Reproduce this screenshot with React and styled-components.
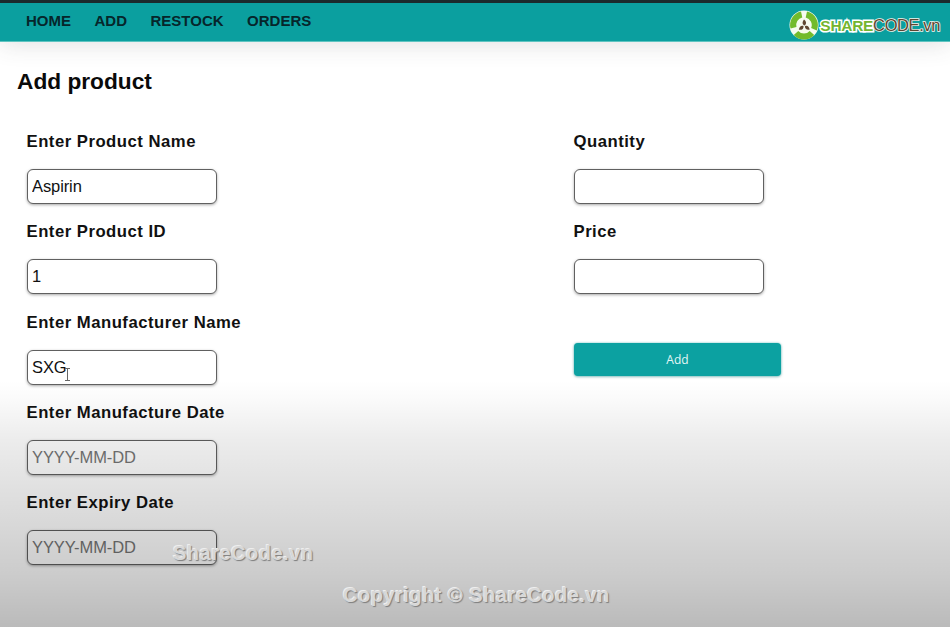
import React from 'react'
import styled, { createGlobalStyle } from 'styled-components'

const GlobalStyle = createGlobalStyle`
  html, body {
    margin: 0;
    padding: 0;
    background: #fff;
    font-family: "Liberation Sans", Arial, sans-serif;
  }
`;

const leftFields = [
  { label: 'Enter Product Name', value: 'Aspirin' },
  { label: 'Enter Product ID', value: '1' },
  { label: 'Enter Manufacturer Name', value: 'SXG', cursor: true },
  { label: 'Enter Manufacture Date', placeholder: 'YYYY-MM-DD' },
  { label: 'Enter Expiry Date', placeholder: 'YYYY-MM-DD' },
];

const rightFields = [
  { label: 'Quantity', value: '' },
  { label: 'Price', value: '' },
];

const navLinks = ['HOME', 'ADD', 'RESTOCK', 'ORDERS'];

const Logo = () => (
  <LogoWrap>
    <svg width="30" height="30" viewBox="0 0 32 32">
      <circle cx="16" cy="16" r="15.5" fill="#f6fbef" />
      <g fill="none" stroke="#72bb2c" strokeWidth="6.5">
        <path d="M4.8 19 A11.5 11.5 0 0 1 13.5 4.8" />
        <path d="M18.5 4.8 A11.5 11.5 0 0 1 26.6 20.5" />
        <path d="M24.5 24.5 A11.5 11.5 0 0 1 7.5 24.5" />
      </g>
      <g fill="#5f4630">
        <path d="M16 10 C18.8 12.2 18.8 15 16.5 16.5 C14.2 15.5 13.7 12.8 16 10 Z" />
        <path d="M10.5 21 C11 17.8 13.2 16.2 15.5 17.2 C15.8 19.8 13.7 21.6 10.5 21 Z" />
        <path d="M22 21 C18.9 21.8 17 20 17 17.4 C19.3 16 21.6 17.8 22 21 Z" />
      </g>
    </svg>
    <LogoText>
      <LogoShare>SHARE</LogoShare>
      <LogoCode>CODE.vn</LogoCode>
    </LogoText>
  </LogoWrap>
);

const Field = ({ label, value, placeholder, cursor }) => (
  <FieldBox>
    <Label>{label}</Label>
    <InputWrap>
      <Input type="text" readOnly value={value} placeholder={placeholder} />
      {cursor && (
        <TextCursor width="7" height="13" viewBox="0 0 7 13">
          <path d="M1 .5h5M1 12.5h5M3.5 .5v12" stroke="#666" strokeWidth="1" fill="none" />
        </TextCursor>
      )}
    </InputWrap>
  </FieldBox>
);

const App = () => (
  <Page>
    <GlobalStyle />
    <Nav>
      <NavLinks>
        {navLinks.map((link) => <NavLink key={link}>{link}</NavLink>)}
      </NavLinks>
      <Logo />
    </Nav>
    <Main>
      <Title>Add product</Title>
      <Columns>
        <Column>
          {leftFields.map((f) => <Field key={f.label} {...f} />)}
        </Column>
        <Column>
          {rightFields.map((f) => <Field key={f.label} {...f} />)}
          <AddButton>Add</AddButton>
        </Column>
      </Columns>
    </Main>
    <Mark $left={173} $top={542} $size={20} $spacing={0.5}>ShareCode.vn</Mark>
    <Mark $left={343} $top={584} $size={20} $spacing={0.5}>Copyright © ShareCode.vn</Mark>
  </Page>
);

const Page = styled.div`
  position: relative;
  height: 627px;
  overflow: hidden;
  background: #fff;

  &::after {
    content: '';
    position: absolute;
    inset: 0;
    pointer-events: none;
    background: linear-gradient(
      to bottom,
      rgba(0, 0, 0, 0) 0,
      rgba(0, 0, 0, 0) 380px,
      rgba(0, 0, 0, 0.02) 400px,
      rgba(0, 0, 0, 0.075) 440px,
      rgba(0, 0, 0, 0.137) 507px,
      rgba(0, 0, 0, 0.2) 573px,
      rgba(0, 0, 0, 0.27) 627px
    );
  }
`;

const Nav = styled.nav`
  position: relative;
  z-index: 1;
  display: flex;
  align-items: center;
  justify-content: space-between;
  height: 38px;
  padding: 0 10px 0 26px;
  background: #0b9f9f;
  border-top: 3px solid #1b2a2c;
  box-shadow: 0 1px 0 #5fc4c0, 0 3px 24px rgba(60, 60, 70, 0.16);
`;

const NavLinks = styled.div`
  display: flex;
  gap: 23.5px;
  margin-top: -3px;
`;

const NavLink = styled.a`
  font-size: 15px;
  font-weight: 700;
  color: #06262b;
`;

const LogoWrap = styled.div`
  display: flex;
  align-items: center;
  gap: 1px;
  margin-top: 6px;
`;

const LogoText = styled.div`
  white-space: nowrap;
`;

const LogoShare = styled.span`
  font-size: 15.5px;
  font-weight: 700;
  letter-spacing: -0.3px;
  color: #74b52f;
  -webkit-text-stroke: 3px #fff;
  paint-order: stroke fill;
`;

const LogoCode = styled.span`
  font-size: 16.5px;
  letter-spacing: -0.4px;
  color: #5f4630;
  -webkit-text-stroke: 1.5px #f2f5ee;
  paint-order: stroke fill;
`;

const Main = styled.main`
  padding: 26px 0 0 17px;
`;

const Title = styled.h1`
  margin: 0 0 37px;
  font-size: 22.7px;
  line-height: 28px;
  font-weight: 700;
  color: #0a0a0a;
`;

const Columns = styled.div`
  display: grid;
  grid-template-columns: 547px 1fr;
  padding-left: 10px;
`;

const Column = styled.div`
  display: flex;
  flex-direction: column;
`;

const FieldBox = styled.div`
  display: flex;
  flex-direction: column;
  height: 90.3px;
`;

const Label = styled.label`
  font-size: 16.7px;
  letter-spacing: 0.5px;
  line-height: 20px;
  font-weight: 700;
  color: #111;
  margin: 0 0 17px -0.5px;
`;

const InputWrap = styled.div`
  position: relative;
  width: 190px;
`;

const Input = styled.input`
  box-sizing: border-box;
  display: block;
  width: 190px;
  height: 35px;
  padding: 0 4px;
  background: #fff;
  border: 1.5px solid #606060;
  border-radius: 6px;
  box-shadow: 0 1px 3px rgba(0, 0, 0, 0.35);
  outline: none;
  font-family: "Liberation Sans", Arial, sans-serif;
  font-size: 16.5px;
  letter-spacing: -0.1px;
  color: #111;

  &::placeholder {
    color: #757575;
    opacity: 1;
  }
`;

const TextCursor = styled.svg`
  position: absolute;
  left: 37px;
  top: 18px;
`;

const AddButton = styled.button`
  width: 207px;
  height: 33px;
  margin-top: 30px;
  padding-top: 2px;
  border: none;
  border-radius: 4px;
  background: #0ca1a1;
  box-shadow: 0 0 2px rgba(30, 170, 170, 0.6), 0 1px 3px rgba(0, 90, 90, 0.35);
  color: #e4f6f5;
  font-family: "Open Sans", sans-serif;
  font-size: 12px;
`;

const Mark = styled.div`
  position: absolute;
  z-index: 2;
  left: ${(p) => p.$left}px;
  top: ${(p) => p.$top}px;
  font-size: ${(p) => p.$size}px;
  letter-spacing: ${(p) => p.$spacing}px;
  line-height: 22px;
  font-weight: 700;
  white-space: nowrap;
  color: #d8d8d8;
  text-shadow: 1px 1px 1px #7d7d7d, -1px -1px 0 #eee;
`;

export default App
